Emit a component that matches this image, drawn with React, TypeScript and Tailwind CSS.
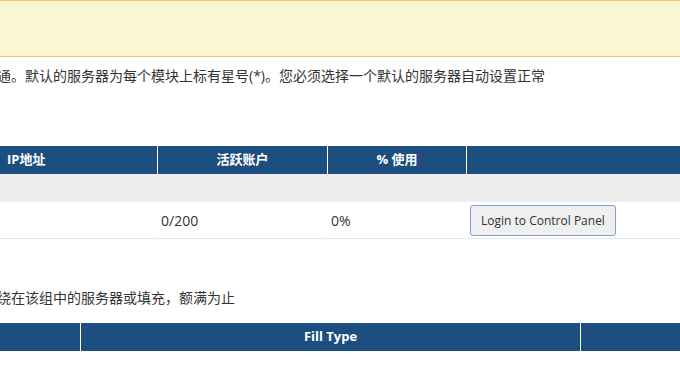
import React from 'react';

const font = "font-['Open_Sans','Noto_Sans_CJK_SC',sans-serif]";

export default function App() {
  return (
    <div className={`${font} w-[680px] h-[366px] overflow-hidden bg-white text-[#333]`}>
      {/* notice box */}
      <div className="h-[57px] border-y border-[#efc66e] bg-[#faf5d3]" />

      <p className="mt-[9px] ml-[-3px] whitespace-nowrap text-[14px] leading-[20px]">
        通。默认的服务器为每个模块上标有星号(*)。您必须选择一个默认的服务器自动设置正常
      </p>

      {/* servers table */}
      <div className="mt-[60px] text-[14px]">
        <div className="flex h-[28px] gap-px text-[13px] font-bold text-white">
          <div className="flex w-[157px] items-center bg-[#1c4f80] pl-[7px]">IP地址</div>
          <div className="flex w-[169px] items-center justify-center bg-[#1c4f80]">活跃账户</div>
          <div className="flex w-[138px] items-center justify-center bg-[#1c4f80]">% 使用</div>
          <div className="flex-1 bg-[#1c4f80]" />
        </div>
        <div className="h-[28px] bg-[#ececec]" />
        <div className="flex h-[37px] gap-px">
          <div className="w-[157px] border-b border-[#e6e6e6]" />
          <div className="flex w-[169px] items-center border-b border-[#e6e6e6] pl-[3px]">0/200</div>
          <div className="flex w-[138px] items-center border-b border-[#e6e6e6] pl-[3px]">0%</div>
          <div className="flex flex-1 items-center border-b border-[#e6e6e6] pl-[3px]">
            <button className="mt-px h-[31px] w-[146px] rounded-[3px] border border-[#7f9fd8] bg-[#efefef] text-[12px] text-[#333]">
              Login to Control Panel
            </button>
          </div>
        </div>
      </div>

      <p className="mt-[49px] ml-[-3px] whitespace-nowrap text-[14px] leading-[20px]">
        绕在该组中的服务器或填充，额满为止
      </p>

      {/* groups table */}
      <div className="mt-[15px] flex h-[28px] gap-px text-[13px] font-bold text-white">
        <div className="w-[80px] bg-[#1c4f80]" />
        <div className="flex w-[499px] items-center justify-center bg-[#1c4f80]">Fill Type</div>
        <div className="flex-1 bg-[#1c4f80]" />
      </div>
    </div>
  );
}
